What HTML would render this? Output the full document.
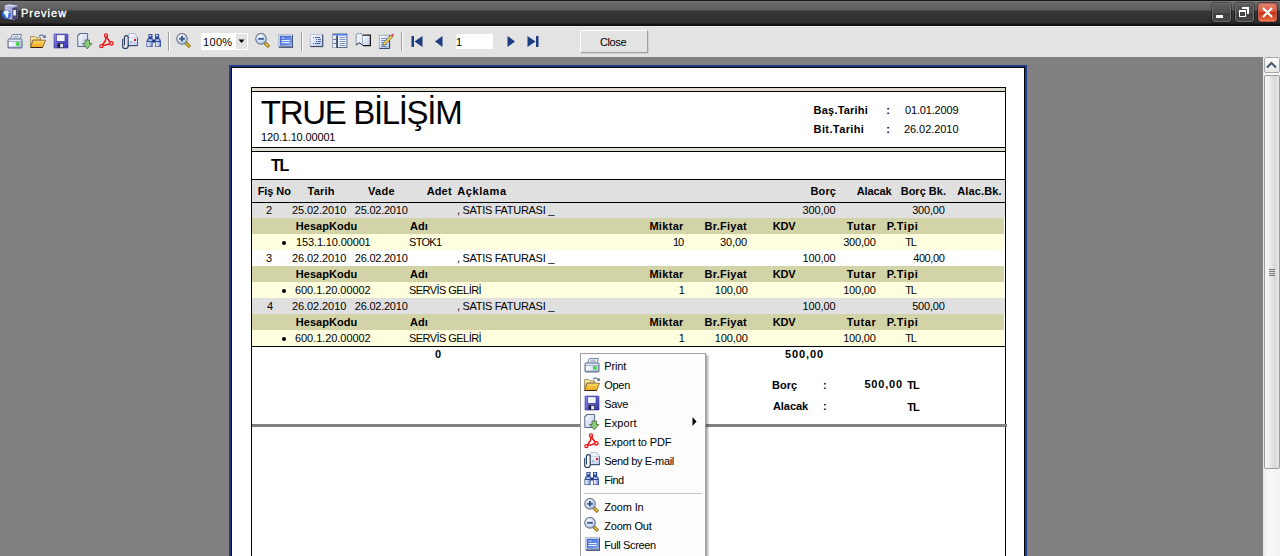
<!DOCTYPE html>
<html><head><meta charset="utf-8"><style>
*{box-sizing:border-box}
html,body{margin:0;padding:0}
body{width:1280px;height:556px;overflow:hidden;position:relative;background:#808080;font-family:"Liberation Sans",sans-serif}
.a{position:absolute}
.t{position:absolute;line-height:1;white-space:nowrap}
.ic{position:absolute;overflow:visible}
.sep{position:absolute;top:32px;width:2px;height:19px;border-left:1px solid #a0a0a0;border-right:1px solid #fff}
.nav{position:absolute;top:36px}
</style></head><body>
<svg width="0" height="0" style="position:absolute">
<defs>
 <linearGradient id="gPaper" x1="0" y1="0" x2="1" y2="1"><stop offset="0" stop-color="#ffffff"/><stop offset="1" stop-color="#b8c8ec"/></linearGradient>
 <linearGradient id="gPaperH" x1="0" y1="0" x2="1" y2="0"><stop offset="0" stop-color="#ffffff"/><stop offset="1" stop-color="#c0ccec"/></linearGradient>
 <linearGradient id="gFold" x1="0" y1="0" x2="0" y2="1"><stop offset="0" stop-color="#fff0a0"/><stop offset="1" stop-color="#e8c060"/></linearGradient>
 <linearGradient id="gFold2" x1="0" y1="0" x2="0" y2="1"><stop offset="0" stop-color="#fcd868"/><stop offset="1" stop-color="#f0a818"/></linearGradient>
 <linearGradient id="gBlue" x1="0" y1="0" x2="1" y2="1"><stop offset="0" stop-color="#9090f0"/><stop offset="1" stop-color="#3030b0"/></linearGradient>
 <linearGradient id="gFull" x1="0" y1="0" x2="1" y2="1"><stop offset="0" stop-color="#3868d8"/><stop offset="1" stop-color="#88a8f0"/></linearGradient>
 <linearGradient id="gTube" x1="0" y1="0" x2="1" y2="0"><stop offset="0" stop-color="#ffffff"/><stop offset="1" stop-color="#7890d0"/></linearGradient>
 <radialGradient id="gLens" cx="0.4" cy="0.35" r="0.65"><stop offset="0" stop-color="#ffffff"/><stop offset="1" stop-color="#b0c8ec"/></radialGradient>
 <symbol id="print" viewBox="0 0 16 16">
  <path d="M3.3 6.5 L5.3 1.5 L14.5 1.5 L13 6.5 Z" fill="#f2f4fa" stroke="#6a7a9a" stroke-width="0.9"/>
  <path d="M6.5 3.2 h5.5 M6 4.8 h5.5" stroke="#8896b8" stroke-width="0.8"/>
  <path d="M1 7 Q1 6 2 6 L14 6 Q15 6 15 7 L15 14 Q15 15 14 15 L2 15 Q1 15 1 14 Z" fill="#9aa8c8" stroke="#4a5a7c" stroke-width="0.9"/>
  <rect x="1.6" y="6.6" width="12.8" height="1.6" fill="#dfe4f0"/>
  <rect x="1.8" y="9" width="12.4" height="4.6" fill="url(#gPaperH)"/>
  <rect x="9.2" y="9.4" width="3.2" height="3.2" fill="#18d020"/>
  <rect x="10.4" y="10.6" width="1" height="1" fill="#c0ff60"/>
 </symbol>
 <symbol id="open" viewBox="0 0 16 16">
  <path d="M9.2 3.2 q2.5 -2.6 5.2 0.3" fill="none" stroke="#3c5a90" stroke-width="1.1"/>
  <path d="M15.5 2 L15.8 5 L12.6 4.4 Z" fill="#3c5a90"/>
  <path d="M0.6 3.5 L4.8 3.5 L6 4.8 L10.5 4.8 L10.5 7 L3 7 L0.6 13.5 Z" fill="url(#gFold)" stroke="#8a7a50" stroke-width="0.8"/>
  <path d="M3.2 7.2 L15.6 7.2 L12.6 14.5 L0.6 14.5 Z" fill="url(#gFold2)" stroke="#7a6030" stroke-width="0.8"/>
  <path d="M0.6 14.5 L12.6 14.5" stroke="#302010" stroke-width="1"/>
 </symbol>
 <symbol id="save" viewBox="0 0 16 16">
  <path d="M1 1 L14.5 1 L15 1.5 L15 15 L1 15 Z" fill="url(#gBlue)" stroke="#3838a8" stroke-width="0.6"/>
  <rect x="3.5" y="1.8" width="8.5" height="6.5" fill="#f0f2fc" stroke="#2c2c90" stroke-width="0.6"/>
  <rect x="4.5" y="10.2" width="6.5" height="4.5" fill="#202038"/>
  <rect x="7.2" y="10.8" width="3" height="3.5" fill="#e8ecf8"/>
 </symbol>
 <symbol id="export" viewBox="0 0 16 16">
  <path d="M0.8 2.2 L2.6 0.5 L10.6 0.5 L10.6 13.5 L0.8 13.5 Z" fill="url(#gPaper)" stroke="#4a5a80" stroke-width="0.9"/>
  <path d="M2.6 0.5 L2.6 2.2 L0.8 2.2" fill="none" stroke="#4a5a80" stroke-width="0.6"/>
  <path d="M8 7 L12.5 7 L12.5 10.5 L15 10.5 L10.2 15.8 L5.5 10.5 L8 10.5 Z" fill="#88c878" stroke="#2a4a20" stroke-width="0.6"/>
 </symbol>
 <symbol id="pdf" viewBox="0 0 16 16">
  <path d="M7 4 L6.4 7.8 L3.4 12 M4.2 12.6 L10.8 10.8 M7.6 4.2 L11.2 9.2" fill="none" stroke="#f01010" stroke-width="1.5"/>
  <circle cx="7" cy="2.4" r="1.7" fill="#f4a0a0" stroke="#e81818" stroke-width="1.1"/>
  <circle cx="2.4" cy="13.1" r="1.6" fill="#f8d0d0" stroke="#f01010" stroke-width="1.2"/>
  <circle cx="12.4" cy="10.4" r="1.7" fill="#f8d0d0" stroke="#f01010" stroke-width="1.2"/>
 </symbol>
 <symbol id="mail" viewBox="0 0 16 16">
  <path d="M5.5 4.5 L7.4 0.4 L12.6 0.4 L15.8 4.5 Z" fill="#eef2fc" stroke="#90a0c4" stroke-width="0.7"/>
  <path d="M5.5 4.5 L15.8 4.5 L15.8 12.7 L5.5 12.7 Z" fill="url(#gPaper)"/>
  <path d="M15.8 4.5 L15.8 12.7 L6 12.7" fill="none" stroke="#24365c" stroke-width="1"/>
  <rect x="12" y="6" width="2" height="2" fill="#e02010"/>
  <path d="M7.8 8.8 h2.4 M7.8 10 h1.6" stroke="#7888b0" stroke-width="0.7"/>
  <path d="M0.6 6 L0.6 13 Q0.6 15.6 3.4 15.6 Q6.2 15.6 6.2 13 L6.2 4.6 Q6.2 2.6 4.3 2.6 Q2.4 2.6 2.4 4.6 L2.4 12.4" fill="none" stroke="#24385e" stroke-width="1.15"/>
  <path d="M1.3 6.5 L1.3 13" stroke="#c8d4f0" stroke-width="0.6"/>
 </symbol>
 <symbol id="find" viewBox="0 0 16 16">
  <path d="M2.4 1 h4.1 v5 h-4.1 Z M9 1 h4.1 v5 h-4.1 Z" fill="#2a4aa0"/>
  <rect x="3.4" y="1.8" width="1.8" height="1.6" fill="#e8eeff"/><rect x="10" y="1.8" width="1.8" height="1.6" fill="#e8eeff"/>
  <path d="M0.5 14 L0.5 8.5 L1.5 5.5 L6.6 5.5 L6.6 14 Z M9 14 L9 5.5 L14 5.5 L15 8.5 L15 14 Z" fill="#2a4aa0"/>
  <rect x="6.4" y="6.5" width="2.8" height="3" fill="#1a3080"/>
  <rect x="1.3" y="9" width="4.6" height="4.4" fill="url(#gTube)"/><rect x="9.7" y="9" width="4.6" height="4.4" fill="url(#gTube)"/>
  <rect x="2.3" y="6.4" width="3.6" height="1.4" fill="#dde6fc"/><rect x="9.7" y="6.4" width="3.6" height="1.4" fill="#dde6fc"/>
 </symbol>
 <symbol id="zin" viewBox="0 0 16 16">
  <path d="M9.5 9.5 L13.9 13.9" stroke="#806000" stroke-width="3.2"/>
  <path d="M10 10 L13.4 13.4" stroke="#e8c848" stroke-width="1.6"/>
  <circle cx="6" cy="5.8" r="5.3" fill="url(#gLens)" stroke="#707888" stroke-width="1.1"/>
  <path d="M3.2 5.8 h5.6 M6 3 v5.6" stroke="#3a5888" stroke-width="1.9"/>
 </symbol>
 <symbol id="zout" viewBox="0 0 16 16">
  <path d="M9.5 9.5 L13.9 13.9" stroke="#806000" stroke-width="3.2"/>
  <path d="M10 10 L13.4 13.4" stroke="#e8c848" stroke-width="1.6"/>
  <circle cx="6" cy="5.8" r="5.3" fill="url(#gLens)" stroke="#707888" stroke-width="1.1"/>
  <path d="M3.2 5.8 h5.6" stroke="#3a5888" stroke-width="1.9"/>
 </symbol>
 <symbol id="full" viewBox="0 0 16 16">
  <rect x="1.5" y="1.5" width="14" height="12.5" fill="#f4f6fc" stroke="#a8b4d0" stroke-width="0.8"/>
  <path d="M2 14.2 L15.8 14.2 L15.8 2" fill="none" stroke="#283858" stroke-width="1.2"/>
  <rect x="3" y="3" width="11.2" height="9.2" fill="url(#gFull)" stroke="#2850b0" stroke-width="0.5"/>
  <path d="M4.5 5 h3 M4.5 7.5 h8 M4.5 9.5 h8" stroke="#e8eeff" stroke-width="1"/>
 </symbol>
 <symbol id="outline" viewBox="0 0 16 16">
  <rect x="1.2" y="1.3" width="12.2" height="12" fill="url(#gPaper)" stroke="#a0acc8" stroke-width="0.6"/>
  <path d="M1.5 13.6 L13.8 13.6 L13.8 1.6" fill="none" stroke="#283858" stroke-width="1"/>
  <path d="M6 4.5 h5 M8.8 6.5 h3 M8.8 8.5 h3 M6 10.5 h5" stroke="#506898" stroke-width="1"/>
  <path d="M4 4.5 h1 M7 6.5 h1 M7 8.5 h1 M4 10.5 h1" stroke="#506898" stroke-width="1"/>
 </symbol>
 <symbol id="table" viewBox="0 0 16 16">
  <rect x="1" y="1" width="13.9" height="13.6" fill="#f0f4fc" stroke="#38486a" stroke-width="0.8"/>
  <rect x="1" y="1" width="13.9" height="1.6" fill="#4a80e8"/>
  <rect x="1" y="2.6" width="3.2" height="12" fill="#e8eef8"/>
  <rect x="4.2" y="2.6" width="1.8" height="12" fill="#38486a"/>
  <path d="M1.2 6.4 h3 M1.2 10.4 h3" stroke="#38486a" stroke-width="0.8"/>
  <path d="M7.5 4.5 h6 M7.5 6.5 h6 M7.5 8.5 h6 M7.5 10.5 h6 M7.5 12.5 h6" stroke="#7088b8" stroke-width="0.9"/>
 </symbol>
 <symbol id="book" viewBox="0 0 16 16">
  <path d="M1.2 12 L1.2 2.5 Q1.2 0.2 4.2 0.2 Q7.4 0.2 7.4 2.5 L7.4 12 L4.3 9.8 Z" fill="#f0f0f0" stroke="#6a80a8" stroke-width="0.8"/>
  <path d="M1.2 12 L4.3 9.8 L7.4 12" fill="none" stroke="#2a3a60" stroke-width="1"/>
  <rect x="7.8" y="2.2" width="7.5" height="10.2" fill="url(#gPaper)"/>
  <path d="M7.8 2.2 L15.4 2.2 L15.4 12.6 L7.8 12.6" fill="none" stroke="#181818" stroke-width="1.2"/>
 </symbol>
 <symbol id="edit" viewBox="0 0 16 16">
  <rect x="1.2" y="2.2" width="10.2" height="13.2" fill="url(#gPaper)" stroke="#7088b0" stroke-width="0.6"/>
  <path d="M1.5 15.4 L11.6 15.4 L11.6 2.5" fill="none" stroke="#304060" stroke-width="1"/>
  <path d="M3 5.5 h6 M3 7.5 h6 M3 9.5 h6 M3 11.5 h6 M3 13.5 h6" stroke="#5a88d8" stroke-width="0.9"/>
  <path d="M5.2 10.2 L12.8 2.2 L14.6 4 L7 12 L4.8 12.4 Z" fill="#f0d458" stroke="#605018" stroke-width="0.7"/>
  <path d="M12.8 2.2 L14 1 Q15 0.4 15.6 1.2 Q16.2 2 15.6 2.8 L14.6 4 Z" fill="#d84870"/>
 </symbol>
</defs>
</svg>

<!-- title bar -->
<div class="a" style="left:0;top:0;width:1280px;height:26px;background:linear-gradient(#1a1a1a 0,#1a1a1a 1px,#808080 1px,#6c6c6c 2px,#5c5c5c 10px,#373737 11px,#2e2e2e 23px,#111 24px,#111 26px)"></div>
<svg class="a" style="left:0px;top:2px" width="22" height="22" viewBox="0 0 22 22">
 <defs><linearGradient id="gSrv" x1="0" y1="0" x2="1" y2="0"><stop offset="0" stop-color="#c4c4ec"/><stop offset="1" stop-color="#8c8cc4"/></linearGradient>
 <radialGradient id="gGlobe" cx="0.6" cy="0.35" r="0.7"><stop offset="0" stop-color="#70a8ff"/><stop offset="1" stop-color="#1848c0"/></radialGradient></defs>
 <path d="M4.8 3.6 L9 2.4 L17.6 3.4 L17.6 16.6 L13 17.8 L4.8 16.6 Z" fill="url(#gSrv)"/>
 <path d="M4.8 3.6 L9 2.4 L17.6 3.4 L13 4.8 Z" fill="#d8d8f4"/>
 <path d="M12.4 6 L17.6 5 L17.6 16.6 L12.4 17.6 Z" fill="#464670"/>
 <rect x="13.3" y="8" width="2.6" height="5.5" fill="#ececfa"/>
 <circle cx="6.4" cy="12.4" r="4.6" fill="url(#gGlobe)"/>
 <path d="M4.2 9 Q5.8 8 7.8 8.6 L9.3 10.4 L7.8 11.9 L8.3 14.4 L6.8 16.4 L5.8 13.9 L4.8 11.9 L3.3 11.4 Z" fill="#f0f4ff"/>
</svg>
<div class="a" style="left:1212px;top:3px;width:19px;height:19px;border:1px solid #6c6c6c;border-radius:3px;box-shadow:0 0 0 1px rgba(0,0,0,0.35);background:linear-gradient(#5c5c5c,#505050 50%,#3e3e3e 52%,#464646)"></div>
<div class="a" style="left:1216px;top:15px;width:7px;height:3px;background:#fff"></div>
<div class="a" style="left:1235px;top:3px;width:19px;height:19px;border:1px solid #6c6c6c;border-radius:3px;box-shadow:0 0 0 1px rgba(0,0,0,0.35);background:linear-gradient(#5c5c5c,#505050 50%,#3e3e3e 52%,#464646)"></div>
<div class="a" style="left:1242px;top:7px;width:7px;height:7px;border:1px solid #fff;border-top-width:2px;border-right-width:2px"></div>
<div class="a" style="left:1239px;top:10px;width:7px;height:7px;border:1px solid #fff;border-top-width:2px;background:#454545;box-shadow:1px -1px 0 #454545"></div>
<div class="a" style="left:1258px;top:3px;width:19px;height:19px;border:1px solid #c06050;border-radius:3px;box-shadow:0 0 0 1px rgba(0,0,0,0.35);background:linear-gradient(#e08070,#d85a40 45%,#d03010 50%,#e05a30 85%,#f07858)"></div>
<svg class="a" style="left:1258px;top:3px" width="19" height="19" viewBox="0 0 19 19"><path d="M5 5 L14 14 M14 5 L5 14" stroke="#fff" stroke-width="2.2"/></svg>
<!-- toolbar -->
<div class="a" style="left:0;top:26px;width:1280px;height:31px;background:#e3e3e3;border-top:1px solid #ececec"></div>
<svg class="ic" style="left:7px;top:33px" width="16" height="16" viewBox="0 0 16 16"><use href="#print"/></svg><svg class="ic" style="left:30px;top:33px" width="16" height="16" viewBox="0 0 16 16"><use href="#open"/></svg><svg class="ic" style="left:53px;top:33px" width="16" height="16" viewBox="0 0 16 16"><use href="#save"/></svg><svg class="ic" style="left:77px;top:33px" width="16" height="16" viewBox="0 0 16 16"><use href="#export"/></svg><svg class="ic" style="left:99px;top:33px" width="16" height="16" viewBox="0 0 16 16"><use href="#pdf"/></svg><svg class="ic" style="left:122px;top:33px" width="16" height="16" viewBox="0 0 16 16"><use href="#mail"/></svg><svg class="ic" style="left:146px;top:33px" width="16" height="16" viewBox="0 0 16 16"><use href="#find"/></svg><svg class="ic" style="left:176px;top:33px" width="16" height="16" viewBox="0 0 16 16"><use href="#zin"/></svg><svg class="ic" style="left:255px;top:33px" width="16" height="16" viewBox="0 0 16 16"><use href="#zout"/></svg><svg class="ic" style="left:277px;top:33px" width="16" height="16" viewBox="0 0 16 16"><use href="#full"/></svg><svg class="ic" style="left:309px;top:33px" width="16" height="16" viewBox="0 0 16 16"><use href="#outline"/></svg><svg class="ic" style="left:332px;top:33px" width="16" height="16" viewBox="0 0 16 16"><use href="#table"/></svg><svg class="ic" style="left:355px;top:33px" width="16" height="16" viewBox="0 0 16 16"><use href="#book"/></svg><svg class="ic" style="left:378px;top:33px" width="16" height="16" viewBox="0 0 16 16"><use href="#edit"/></svg>
<div class="sep" style="left:168px"></div>
<div class="sep" style="left:301px"></div>
<div class="sep" style="left:401px"></div>
<div class="a" style="left:201px;top:33px;width:47px;height:17px;background:#fff"></div>
<div class="a" style="left:236px;top:34px;width:11px;height:15px;background:#e3e3e3"></div>
<svg class="a" style="left:238px;top:39px" width="7" height="5"><path d="M0.5 0.5 L6.5 0.5 L3.5 4 Z" fill="#000"/></svg>
<svg class="a" style="left:411px;top:36px" width="12" height="11"><rect x="0.5" y="0" width="2.5" height="11" fill="#1e3c80"/><path d="M11.5 0 L3.5 5.5 L11.5 11 Z" fill="#1e3c80"/></svg>
<svg class="a" style="left:435px;top:36px" width="8" height="11"><path d="M7.5 0 L0 5.5 L7.5 11 Z" fill="#1e3c80"/></svg>
<div class="a" style="left:456px;top:34px;width:37px;height:15px;background:#fff"></div>
<svg class="a" style="left:507px;top:36px" width="8" height="11"><path d="M0.5 0 L8 5.5 L0.5 11 Z" fill="#1e3c80"/></svg>
<svg class="a" style="left:527px;top:36px" width="12" height="11"><path d="M0.5 0 L8.5 5.5 L0.5 11 Z" fill="#1e3c80"/><rect x="9" y="0" width="2.5" height="11" fill="#1e3c80"/></svg>
<div class="a" style="left:580px;top:30px;width:68px;height:23px;background:#e3e3e3;border-top:1px solid #fff;border-left:1px solid #fff;border-right:1px solid #a0a0a0;border-bottom:1px solid #a0a0a0;box-shadow:1px 1px 0 #d0d0d0"></div>
<!-- page -->
<div class="a" style="left:229px;top:65px;width:798px;height:500px;background:#203c88;padding:2px"><div style="width:100%;height:100%;border:1px solid #000;background:#fff"></div></div>
<!-- report box -->
<div class="a" style="left:251px;top:87px;width:755px;height:480px;border-left:1px solid #000;border-right:1px solid #000;border-top:1px solid #000"></div>
<div class="a" style="left:252px;top:88px;width:753px;height:3px;background:#e0dcd0"></div>
<div class="a" style="left:252px;top:91px;width:753px;height:1px;background:#000"></div>
<div class="a" style="left:252px;top:147px;width:753px;height:1px;background:#000"></div>
<div class="a" style="left:252px;top:148px;width:753px;height:3px;background:#e0dcd0"></div>
<div class="a" style="left:252px;top:151px;width:753px;height:1px;background:#000"></div>
<div class="a" style="left:252px;top:179px;width:753px;height:1px;background:#000"></div>
<div class="a" style="left:252px;top:180px;width:753px;height:22px;background:#e0e0e0"></div>
<div class="a" style="left:252px;top:202px;width:753px;height:1px;background:#000"></div>
<div class="a" style="left:252px;top:203px;width:753px;height:15px;background:#e0e0e0"></div>
<div class="a" style="left:252px;top:218px;width:752px;height:16px;background:#d3d3a8"></div>
<div class="a" style="left:252px;top:234px;width:752px;height:16px;background:#ffffe0"></div>
<div class="a" style="left:252px;top:266px;width:752px;height:16px;background:#d3d3a8"></div>
<div class="a" style="left:252px;top:282px;width:752px;height:16px;background:#ffffe0"></div>
<div class="a" style="left:252px;top:298px;width:753px;height:16px;background:#e0e0e0"></div>
<div class="a" style="left:252px;top:314px;width:752px;height:16px;background:#d3d3a8"></div>
<div class="a" style="left:252px;top:330px;width:752px;height:16px;background:#ffffe0"></div>
<div class="a" style="left:252px;top:346px;width:753px;height:1px;background:#000"></div>
<div class="a" style="left:252px;top:424px;width:755px;height:3px;background:#808080"></div>
<div class="a" style="left:282px;top:241px;width:4px;height:4px;border-radius:50%;background:#000"></div>
<div class="a" style="left:282px;top:289px;width:4px;height:4px;border-radius:50%;background:#000"></div>
<div class="a" style="left:282px;top:337px;width:4px;height:4px;border-radius:50%;background:#000"></div>
<!-- scrollbar -->
<div class="a" style="left:1263px;top:57px;width:17px;height:499px;background:linear-gradient(90deg,#e8e8e8,#fafafa 30%,#f4f4f4)"></div>
<div class="a" style="left:1264px;top:57px;width:16px;height:16px;border:1px solid #a8a8a8;border-radius:2px;background:linear-gradient(#fbfbfb,#e6e6e6)"></div>
<svg class="a" style="left:1266px;top:61px" width="11" height="8"><path d="M1 6.5 L5.5 2 L10 6.5" fill="none" stroke="#4a5870" stroke-width="2"/></svg>
<div class="a" style="left:1264px;top:75px;width:16px;height:394px;border:1px solid #9a9a9a;border-radius:2px;background:linear-gradient(90deg,#f8f8f8,#e8e8e8 40%,#d8d8d8 70%,#e8e8e8)"></div>
<div class="a" style="left:1269px;top:269px;width:6px;height:7px;background:repeating-linear-gradient(#767676 0 1px,transparent 1px 2px)"></div>
<div class="t" id="t0" style="top:8px;font-size:11px;color:#fff;-webkit-text-stroke:0.35px currentColor;letter-spacing:1.000px;left:21.00px;">Preview</div>
<div class="t" id="t1" style="top:37px;font-size:11px;color:#000;letter-spacing:0.334px;left:203.00px;">100%</div>
<div class="t" id="t2" style="top:37px;font-size:11px;color:#000;left:456.00px;">1</div>
<div class="t" id="t3" style="top:37px;font-size:11px;color:#000;letter-spacing:-0.400px;left:600.00px;">Close</div>
<div class="t" id="t4" style="top:96px;font-size:33px;color:#000;letter-spacing:-1.322px;left:260.80px;">TRUE BİLİŞİM</div>
<div class="t" id="t5" style="top:132px;font-size:11px;color:#000;letter-spacing:-0.154px;left:261.00px;">120.1.10.00001</div>
<div class="t" id="t6" style="top:105px;font-size:11px;color:#000;font-weight:bold;letter-spacing:0.211px;left:813.60px;">Baş.Tarihi</div>
<div class="t" id="t7" style="top:105px;font-size:11px;color:#000;font-weight:bold;left:886.20px;">:</div>
<div class="t" id="t8" style="top:105px;font-size:11px;color:#000;letter-spacing:-0.172px;left:905.00px;">01.01.2009</div>
<div class="t" id="t9" style="top:124px;font-size:11px;color:#000;font-weight:bold;letter-spacing:0.383px;left:813.60px;">Bit.Tarihi</div>
<div class="t" id="t10" style="top:124px;font-size:11px;color:#000;font-weight:bold;left:886.20px;">:</div>
<div class="t" id="t11" style="top:124px;font-size:11px;color:#000;letter-spacing:-0.061px;left:904.00px;">26.02.2010</div>
<div class="t" id="t12" style="top:158px;font-size:16px;color:#000;font-weight:bold;letter-spacing:-1.400px;left:271.10px;">TL</div>
<div class="t" id="t13" style="top:186px;font-size:11px;color:#000;font-weight:bold;letter-spacing:-0.080px;left:257.70px;">Fiş No</div>
<div class="t" id="t14" style="top:186px;font-size:11px;color:#000;font-weight:bold;letter-spacing:0.250px;left:307.50px;">Tarih</div>
<div class="t" id="t15" style="top:186px;font-size:11px;color:#000;font-weight:bold;letter-spacing:0.272px;left:368.00px;">Vade</div>
<div class="t" id="t16" style="top:186px;font-size:11px;color:#000;font-weight:bold;letter-spacing:0.136px;left:426.70px;">Adet</div>
<div class="t" id="t17" style="top:186px;font-size:11px;color:#000;font-weight:bold;letter-spacing:0.597px;left:457.20px;">Açklama</div>
<div class="t" id="t18" style="top:186px;font-size:11px;color:#000;font-weight:bold;letter-spacing:0.133px;left:810.50px;">Borç</div>
<div class="t" id="t19" style="top:186px;font-size:11px;color:#000;font-weight:bold;letter-spacing:-0.120px;left:856.80px;">Alacak</div>
<div class="t" id="t20" style="top:186px;font-size:11px;color:#000;font-weight:bold;letter-spacing:0.003px;left:900.70px;">Borç Bk.</div>
<div class="t" id="t21" style="top:186px;font-size:11px;color:#000;font-weight:bold;letter-spacing:0.143px;left:957.20px;">Alac.Bk.</div>
<div class="t" id="t22" style="top:205px;font-size:11px;color:#000;left:266.00px;">2</div>
<div class="t" id="t23" style="top:205px;font-size:11px;color:#000;letter-spacing:-0.086px;left:292.00px;">25.02.2010</div>
<div class="t" id="t24" style="top:205px;font-size:11px;color:#000;letter-spacing:-0.234px;left:354.80px;">25.02.2010</div>
<div class="t" id="t25" style="top:205px;font-size:11px;color:#000;letter-spacing:-0.294px;left:457.00px;">, SATIS FATURASI _</div>
<div class="t" id="t26" style="top:205px;font-size:11px;color:#000;letter-spacing:-0.100px;left:802.40px;">300,00</div>
<div class="t" id="t27" style="top:205px;font-size:11px;color:#000;letter-spacing:-0.200px;left:912.20px;">300,00</div>
<div class="t" id="t28" style="top:221px;font-size:11px;color:#000;font-weight:bold;letter-spacing:0.025px;left:295.80px;">HesapKodu</div>
<div class="t" id="t29" style="top:221px;font-size:11px;color:#000;font-weight:bold;letter-spacing:0.100px;left:410.00px;">Adı</div>
<div class="t" id="t30" style="top:221px;font-size:11px;color:#000;font-weight:bold;letter-spacing:0.320px;left:649.40px;">Miktar</div>
<div class="t" id="t31" style="top:221px;font-size:11px;color:#000;font-weight:bold;letter-spacing:0.263px;left:704.60px;">Br.Fiyat</div>
<div class="t" id="t32" style="top:221px;font-size:11px;color:#000;font-weight:bold;letter-spacing:-0.200px;left:772.70px;">KDV</div>
<div class="t" id="t33" style="top:221px;font-size:11px;color:#000;font-weight:bold;letter-spacing:0.550px;left:846.80px;">Tutar</div>
<div class="t" id="t34" style="top:221px;font-size:11px;color:#000;font-weight:bold;letter-spacing:0.520px;left:886.80px;">P.Tipi</div>
<div class="t" id="t35" style="top:237px;font-size:11px;color:#000;letter-spacing:-0.133px;left:296.00px;">153.1.10.00001</div>
<div class="t" id="t36" style="top:237px;font-size:11px;color:#000;letter-spacing:-0.700px;left:409.00px;">STOK1</div>
<div class="t" id="t37" style="top:237px;font-size:11px;color:#000;letter-spacing:-1.000px;left:673.00px;">10</div>
<div class="t" id="t38" style="top:237px;font-size:11px;color:#000;letter-spacing:-0.125px;left:720.00px;">30,00</div>
<div class="t" id="t39" style="top:237px;font-size:11px;color:#000;letter-spacing:-0.200px;left:843.20px;">300,00</div>
<div class="t" id="t40" style="top:237px;font-size:11px;color:#000;letter-spacing:-1.200px;left:905.20px;">TL</div>
<div class="t" id="t41" style="top:253px;font-size:11px;color:#000;left:266.00px;">3</div>
<div class="t" id="t42" style="top:253px;font-size:11px;color:#000;letter-spacing:-0.086px;left:292.00px;">26.02.2010</div>
<div class="t" id="t43" style="top:253px;font-size:11px;color:#000;letter-spacing:-0.234px;left:354.80px;">26.02.2010</div>
<div class="t" id="t44" style="top:253px;font-size:11px;color:#000;letter-spacing:-0.294px;left:457.00px;">, SATIS FATURASI _</div>
<div class="t" id="t45" style="top:253px;font-size:11px;color:#000;letter-spacing:-0.100px;left:802.40px;">100,00</div>
<div class="t" id="t46" style="top:253px;font-size:11px;color:#000;letter-spacing:-0.400px;left:913.20px;">400,00</div>
<div class="t" id="t47" style="top:269px;font-size:11px;color:#000;font-weight:bold;letter-spacing:0.025px;left:295.80px;">HesapKodu</div>
<div class="t" id="t48" style="top:269px;font-size:11px;color:#000;font-weight:bold;letter-spacing:0.100px;left:410.00px;">Adı</div>
<div class="t" id="t49" style="top:269px;font-size:11px;color:#000;font-weight:bold;letter-spacing:0.320px;left:649.40px;">Miktar</div>
<div class="t" id="t50" style="top:269px;font-size:11px;color:#000;font-weight:bold;letter-spacing:0.263px;left:704.60px;">Br.Fiyat</div>
<div class="t" id="t51" style="top:269px;font-size:11px;color:#000;font-weight:bold;letter-spacing:-0.200px;left:772.70px;">KDV</div>
<div class="t" id="t52" style="top:269px;font-size:11px;color:#000;font-weight:bold;letter-spacing:0.550px;left:846.80px;">Tutar</div>
<div class="t" id="t53" style="top:269px;font-size:11px;color:#000;font-weight:bold;letter-spacing:0.520px;left:886.80px;">P.Tipi</div>
<div class="t" id="t54" style="top:285px;font-size:11px;color:#000;letter-spacing:-0.056px;left:295.00px;">600.1.20.00002</div>
<div class="t" id="t55" style="top:285px;font-size:11px;color:#000;letter-spacing:-0.558px;left:409.00px;">SERVİS GELİRİ</div>
<div class="t" id="t56" style="top:285px;font-size:11px;color:#000;left:678.80px;">1</div>
<div class="t" id="t57" style="top:285px;font-size:11px;color:#000;letter-spacing:-0.100px;left:714.80px;">100,00</div>
<div class="t" id="t58" style="top:285px;font-size:11px;color:#000;letter-spacing:-0.200px;left:843.20px;">100,00</div>
<div class="t" id="t59" style="top:285px;font-size:11px;color:#000;letter-spacing:-1.200px;left:905.20px;">TL</div>
<div class="t" id="t60" style="top:301px;font-size:11px;color:#000;left:267.00px;">4</div>
<div class="t" id="t61" style="top:301px;font-size:11px;color:#000;letter-spacing:-0.086px;left:292.00px;">26.02.2010</div>
<div class="t" id="t62" style="top:301px;font-size:11px;color:#000;letter-spacing:-0.234px;left:354.80px;">26.02.2010</div>
<div class="t" id="t63" style="top:301px;font-size:11px;color:#000;letter-spacing:-0.294px;left:457.00px;">, SATIS FATURASI _</div>
<div class="t" id="t64" style="top:301px;font-size:11px;color:#000;letter-spacing:-0.100px;left:802.40px;">100,00</div>
<div class="t" id="t65" style="top:301px;font-size:11px;color:#000;letter-spacing:-0.200px;left:912.20px;">500,00</div>
<div class="t" id="t66" style="top:317px;font-size:11px;color:#000;font-weight:bold;letter-spacing:0.025px;left:295.80px;">HesapKodu</div>
<div class="t" id="t67" style="top:317px;font-size:11px;color:#000;font-weight:bold;letter-spacing:0.100px;left:410.00px;">Adı</div>
<div class="t" id="t68" style="top:317px;font-size:11px;color:#000;font-weight:bold;letter-spacing:0.320px;left:649.40px;">Miktar</div>
<div class="t" id="t69" style="top:317px;font-size:11px;color:#000;font-weight:bold;letter-spacing:0.263px;left:704.60px;">Br.Fiyat</div>
<div class="t" id="t70" style="top:317px;font-size:11px;color:#000;font-weight:bold;letter-spacing:-0.200px;left:772.70px;">KDV</div>
<div class="t" id="t71" style="top:317px;font-size:11px;color:#000;font-weight:bold;letter-spacing:0.550px;left:846.80px;">Tutar</div>
<div class="t" id="t72" style="top:317px;font-size:11px;color:#000;font-weight:bold;letter-spacing:0.520px;left:886.80px;">P.Tipi</div>
<div class="t" id="t73" style="top:333px;font-size:11px;color:#000;letter-spacing:-0.056px;left:295.00px;">600.1.20.00002</div>
<div class="t" id="t74" style="top:333px;font-size:11px;color:#000;letter-spacing:-0.558px;left:409.00px;">SERVİS GELİRİ</div>
<div class="t" id="t75" style="top:333px;font-size:11px;color:#000;left:678.80px;">1</div>
<div class="t" id="t76" style="top:333px;font-size:11px;color:#000;letter-spacing:-0.100px;left:714.80px;">100,00</div>
<div class="t" id="t77" style="top:333px;font-size:11px;color:#000;letter-spacing:-0.200px;left:843.20px;">100,00</div>
<div class="t" id="t78" style="top:333px;font-size:11px;color:#000;letter-spacing:-1.200px;left:905.20px;">TL</div>
<div class="t" id="t79" style="top:349px;font-size:11px;color:#000;font-weight:bold;left:435.00px;">0</div>
<div class="t" id="t80" style="top:349px;font-size:11px;color:#000;font-weight:bold;letter-spacing:0.880px;left:785.00px;">500,00</div>
<div class="t" id="t81" style="top:380px;font-size:11px;color:#000;font-weight:bold;left:772.00px;">Borç</div>
<div class="t" id="t82" style="top:380px;font-size:11px;color:#000;font-weight:bold;left:823.00px;">:</div>
<div class="t" id="t83" style="top:379px;font-size:11px;color:#000;font-weight:bold;letter-spacing:0.800px;left:864.40px;">500,00</div>
<div class="t" id="t84" style="top:380px;font-size:11px;color:#000;font-weight:bold;letter-spacing:-1.000px;left:907.30px;">TL</div>
<div class="t" id="t85" style="top:401px;font-size:11px;color:#000;font-weight:bold;letter-spacing:-0.080px;left:773.00px;">Alacak</div>
<div class="t" id="t86" style="top:401px;font-size:11px;color:#000;font-weight:bold;left:823.00px;">:</div>
<div class="t" id="t87" style="top:402px;font-size:11px;color:#000;font-weight:bold;letter-spacing:-1.000px;left:907.30px;">TL</div>
<!-- context menu -->
<div class="a" style="left:580px;top:353px;width:126px;height:210px;background:#fdfdfd;border:1px solid #a0a0a0;box-shadow:2px 2px 2px rgba(0,0,0,0.35)"></div>
<div class="a" style="left:584px;top:493px;width:118px;height:1px;background:#c4c4c4"></div>
<svg class="a" style="left:692px;top:417px" width="5" height="9"><path d="M0.5 0 L4.5 4.5 L0.5 9 Z" fill="#000"/></svg>
<svg class="ic" style="left:584px;top:357px" width="16" height="16" viewBox="0 0 16 16"><use href="#print"/></svg><svg class="ic" style="left:584px;top:376px" width="16" height="16" viewBox="0 0 16 16"><use href="#open"/></svg><svg class="ic" style="left:584px;top:395px" width="16" height="16" viewBox="0 0 16 16"><use href="#save"/></svg><svg class="ic" style="left:584px;top:414px" width="16" height="16" viewBox="0 0 16 16"><use href="#export"/></svg><svg class="ic" style="left:584px;top:433px" width="16" height="16" viewBox="0 0 16 16"><use href="#pdf"/></svg><svg class="ic" style="left:584px;top:452px" width="16" height="16" viewBox="0 0 16 16"><use href="#mail"/></svg><svg class="ic" style="left:584px;top:471px" width="16" height="16" viewBox="0 0 16 16"><use href="#find"/></svg><svg class="ic" style="left:584px;top:498px" width="16" height="16" viewBox="0 0 16 16"><use href="#zin"/></svg><svg class="ic" style="left:584px;top:517px" width="16" height="16" viewBox="0 0 16 16"><use href="#zout"/></svg><svg class="ic" style="left:584px;top:536px" width="16" height="16" viewBox="0 0 16 16"><use href="#full"/></svg>
<div class="t" id="t88" style="top:361px;font-size:11px;color:#000;letter-spacing:-0.125px;left:604.20px;">Print</div>
<div class="t" id="t89" style="top:380px;font-size:11px;color:#000;letter-spacing:-0.263px;left:604.20px;">Open</div>
<div class="t" id="t90" style="top:399px;font-size:11px;color:#000;letter-spacing:-0.263px;left:604.20px;">Save</div>
<div class="t" id="t91" style="top:418px;font-size:11px;color:#000;letter-spacing:0.120px;left:604.20px;">Export</div>
<div class="t" id="t92" style="top:437px;font-size:11px;color:#000;letter-spacing:-0.155px;left:604.20px;">Export to PDF</div>
<div class="t" id="t93" style="top:456px;font-size:11px;color:#000;letter-spacing:-0.349px;left:604.20px;">Send by E-mail</div>
<div class="t" id="t94" style="top:475px;font-size:11px;color:#000;letter-spacing:-0.462px;left:604.20px;">Find</div>
<div class="t" id="t95" style="top:502px;font-size:11px;color:#000;letter-spacing:-0.137px;left:604.20px;">Zoom In</div>
<div class="t" id="t96" style="top:521px;font-size:11px;color:#000;letter-spacing:-0.175px;left:604.20px;">Zoom Out</div>
<div class="t" id="t97" style="top:540px;font-size:11px;color:#000;letter-spacing:-0.380px;left:604.20px;">Full Screen</div>
</body></html>
